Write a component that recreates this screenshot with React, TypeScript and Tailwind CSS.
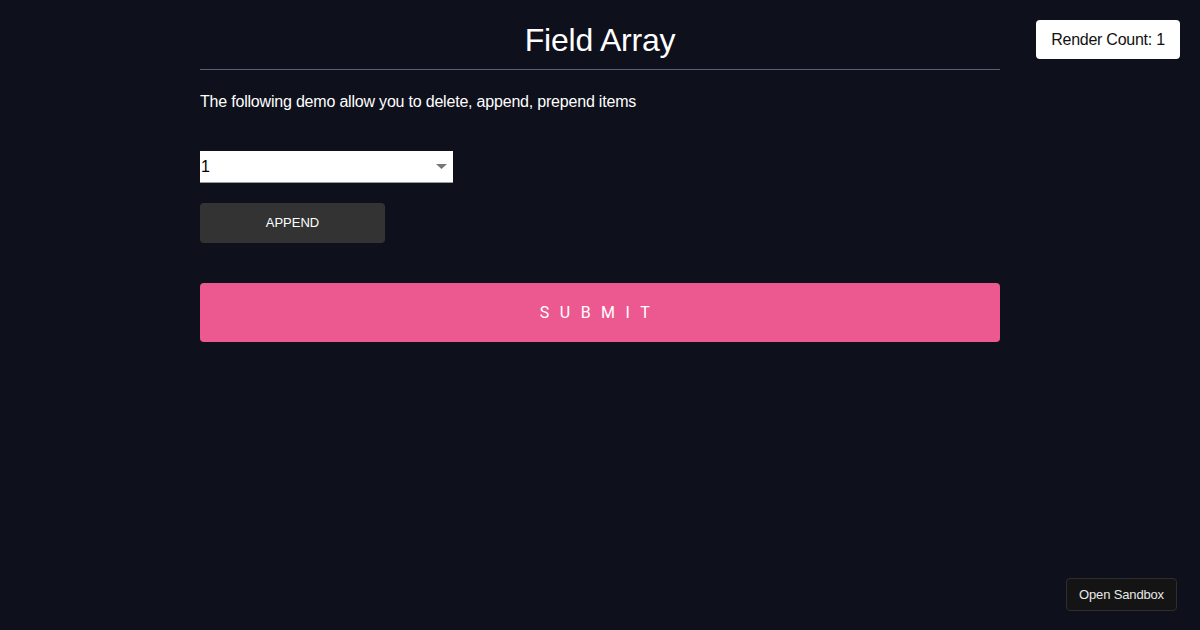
export default function App() {
  return (
    <div
      className="relative min-h-[630px] w-full bg-[#0e101c] text-white"
      style={{ fontFamily: '"Liberation Sans", Arial, sans-serif' }}
    >
      <div className="mx-auto w-[800px]">
        <h1 className="border-b border-[#56627c] pt-[20px] pb-[9px] text-center text-[32px] leading-[40px] font-normal tracking-[-0.2px]">
          Field Array
        </h1>
        <p className="mt-[22px] text-[16px] leading-[20px] tracking-[-0.2px]">
          The following demo allow you to delete, append, prepend items
        </p>
        <div className="mt-[39px] flex h-[32px] w-[253px] items-center justify-between border-b border-[#9a9a9a] bg-white pr-[6px] text-black">
          <span className="pl-[1px] text-[16px]">1</span>
          <svg width="11" height="5" viewBox="0 0 11 5">
            <path d="M0 0h11L5.5 5z" fill="#777" />
          </svg>
        </div>
        <button className="mt-[20px] flex h-[40px] w-[185px] items-center justify-center rounded-[4px] bg-[#333333] text-[13px] text-white">
          APPEND
        </button>
        <button
          className="mt-[40px] flex h-[59px] w-full items-center justify-center rounded-[4px] bg-[#ec5990] text-[16px] tracking-[10.5px] text-white"
          style={{ fontFamily: 'Roboto, "Liberation Sans", sans-serif' }}
        >
          SUBMIT
        </button>
      </div>
      <div className="absolute top-[20px] right-[20px] flex h-[39px] w-[144px] items-center justify-center rounded-[4px] bg-white text-[16px] tracking-[-0.25px] text-[#111]">
        Render Count: 1
      </div>
      <div className="absolute right-[23px] bottom-[19px] flex h-[33px] w-[111px] items-center justify-center rounded-[4px] border border-[#2e2e2e] bg-[#141414] text-[13px] tracking-[-0.15px] text-[#e8e8e8]">
        Open Sandbox
      </div>
    </div>
  );
}
